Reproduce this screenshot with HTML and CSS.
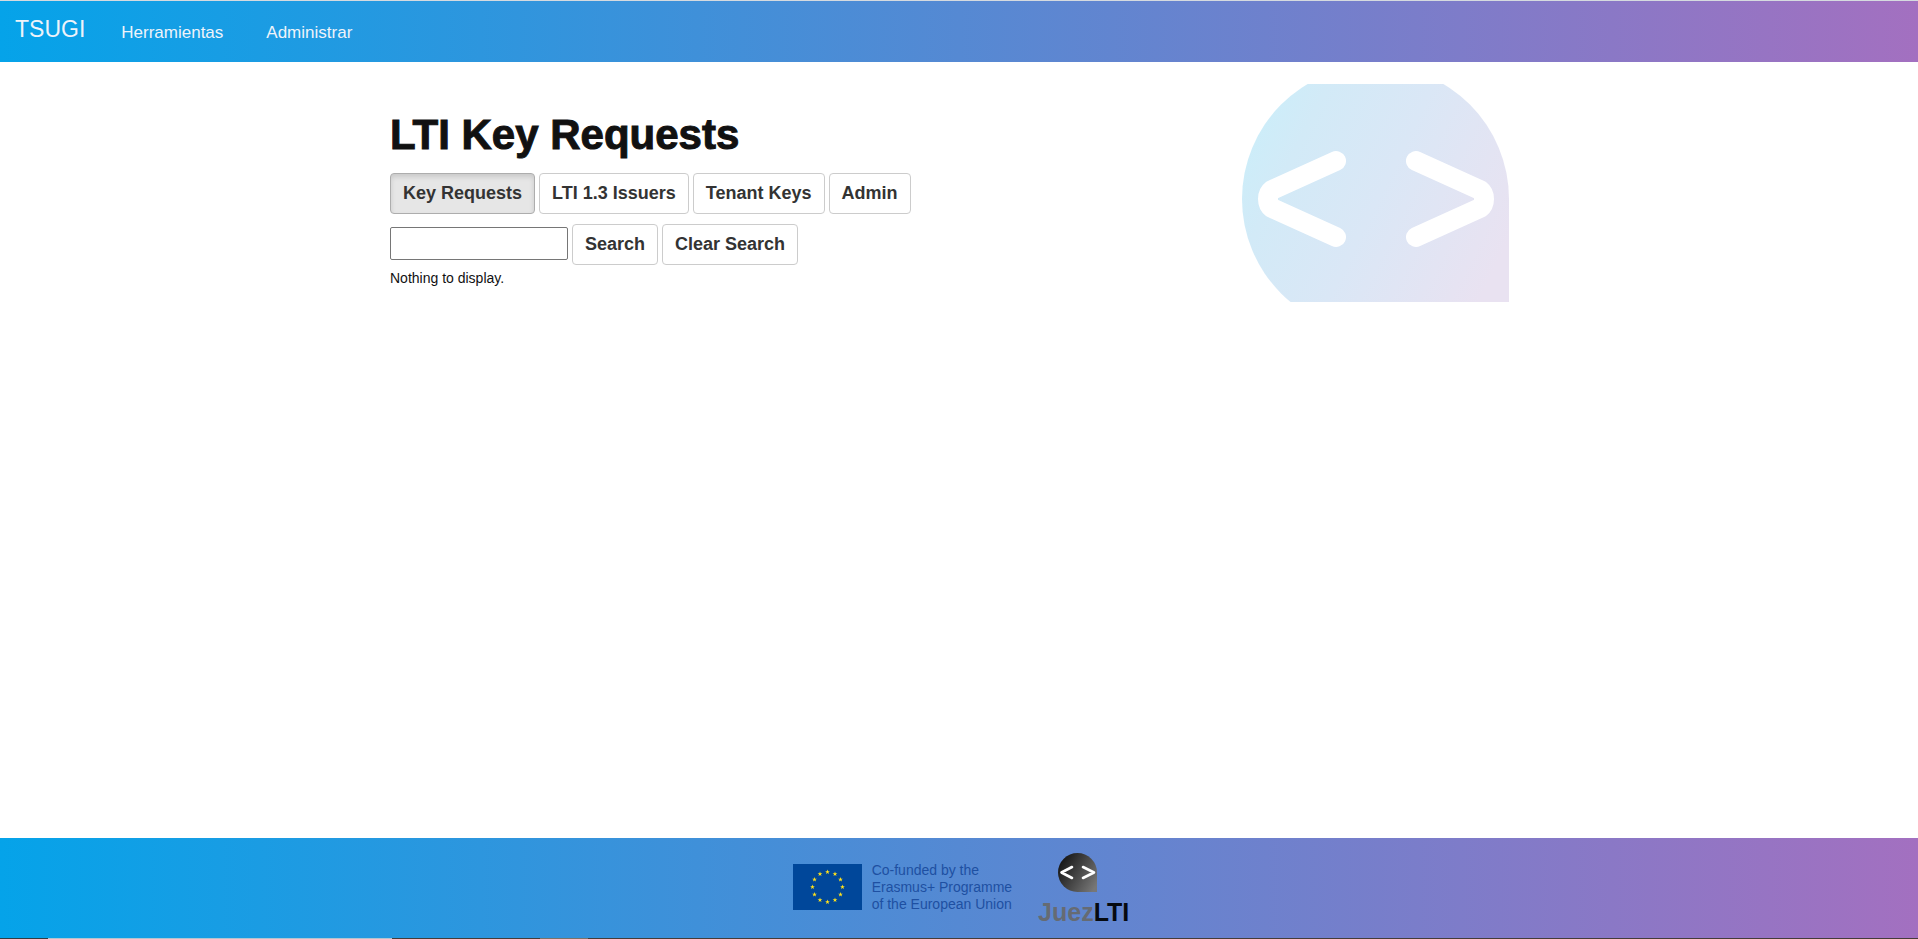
FILE: index.html
```html
<!DOCTYPE html>
<html lang="es">
<head>
<meta charset="utf-8">
<title>LTI Key Requests</title>
<link rel="stylesheet" href="styles.css">
</head>
<body>
<nav class="navbar">
  <a class="brand" href="#">TSUGI</a>
  <a class="nav-link" href="#">Herramientas</a>
  <a class="nav-link" href="#">Administrar</a>
</nav>
<main class="container">
  <section class="content">
    <h1>LTI Key Requests</h1>
    <div class="row">
      <a class="btn active" href="#">Key Requests</a>
      <a class="btn" href="#">LTI 1.3 Issuers</a>
      <a class="btn" href="#">Tenant Keys</a>
      <a class="btn" href="#">Admin</a>
    </div>
    <form class="row">
      <input class="search" type="text" aria-label="Search">
      <button class="btn" type="submit">Search</button>
      <button class="btn" type="button">Clear Search</button>
    </form>
    <p class="empty">Nothing to display.</p>
  </section>
  <svg class="watermark" viewBox="0 0 267 218" aria-hidden="true">
    <defs>
      <linearGradient id="pale" gradientUnits="userSpaceOnUse" x1="20" y1="40" x2="265" y2="160">
        <stop offset="0" stop-color="#cdedf9"/>
        <stop offset=".15" stop-color="#d2eaf7"/>
        <stop offset=".5" stop-color="#dae7f6"/>
        <stop offset="1" stop-color="#e9e2f1"/>
      </linearGradient>
    </defs>
    <path fill="url(#pale)" d="M133.500-18.500A133.500 133.500 0 0 1 267 115V248.500H133.500A133.500 133.500 0 0 1 133.500-18.500Z"/>
    <path fill="none" stroke="#fff" stroke-width="20" stroke-linecap="round" stroke-linejoin="round" d="M94 77L30 106Q26 109 26 115T30 124L94 153M174 77L238 106Q242 109 242 115T238 124L174 153"/>
  </svg>
</main>
<footer class="footer">
  <svg class="flag" viewBox="0 0 69 46" role="img" aria-label="European Union">
    <defs><path id="star" fill="#ffe11b" d="M0-2.500L.6-.8H2.400L.95.300 1.500 2 0 1-1.500 2-.95.300-2.400-.8H-.6Z"/></defs>
    <rect width="69" height="46" fill="#00479a"/>
    <use href="#star" x="34.500" y="8"/><use href="#star" x="42" y="10"/><use href="#star" x="47.500" y="15.500"/>
    <use href="#star" x="49.500" y="23"/><use href="#star" x="47.500" y="30.500"/><use href="#star" x="42" y="36"/>
    <use href="#star" x="34.500" y="38"/><use href="#star" x="27" y="36"/><use href="#star" x="21.500" y="30.500"/>
    <use href="#star" x="19.500" y="23"/><use href="#star" x="21.500" y="15.500"/><use href="#star" x="27" y="10"/>
  </svg>
  <p class="funding">Co-funded by the<br>Erasmus+ Programme<br>of the European Union</p>
  <div class="juez">
    <svg class="juez-mark" viewBox="0 0 39 39" aria-hidden="true">
      <defs><linearGradient id="dark" x1="0" y1=".2" x2="1" y2=".8"><stop offset="0" stop-color="#111"/><stop offset="1" stop-color="#777"/></linearGradient></defs>
      <path fill="url(#dark)" d="M19.500 0A19.500 19.500 0 0 1 39 19.500V39H19.500A19.500 19.500 0 0 1 19.500 0Z"/>
      <path fill="none" stroke="#fff" stroke-width="2.600" stroke-linecap="round" stroke-linejoin="round" d="M14 14L3.500 19.500 14 25M25 14L36 19.500 25 25"/>
    </svg>
    <span class="juez-name">Juez<b>LTI</b></span>
  </div>
</footer>
<div class="taskbar"></div>
</body>
</html>
```
FILE: styles.css
```css
* { box-sizing: border-box; }
body {
  margin: 0;
  min-height: 100vh;
  display: flex;
  flex-direction: column;
  background: #fff;
  color: #111;
  font: 14px/20px "Liberation Sans", Arial, sans-serif;
}
.navbar, .footer { background: linear-gradient(90deg, #05a3e9, #5589d3 50%, #a370c0); }
.navbar {
  display: flex;
  align-items: flex-start;
  height: 62px;
  padding: 0 15px;
  border-top: 1px solid #d5dadf;
}
.navbar a { color: #eef3fa; text-decoration: none; }
.brand { font-size: 23px; line-height: 28px; padding: 14px 20px 0 0; }
.nav-link { font-size: 17px; line-height: 24px; padding: 20px 27px 0 16px; }
.container {
  flex: 1;
  display: flex;
  justify-content: space-between;
  align-items: flex-start;
  width: 100%;
  max-width: 1170px;
  margin: 0 auto;
  padding: 22px 35px 0 16px;
}
.content { padding-top: 27px; }
h1 {
  margin: 0 0 14px;
  font-size: 42px;
  line-height: 48px;
  font-weight: 900;
  -webkit-text-stroke: 1px #111;
}
.row { display: flex; align-items: flex-start; gap: 4px; margin-bottom: 10px; }
.btn {
  padding: 10px 12px;
  border: 1px solid #ccc;
  border-radius: 4px;
  background: #fff;
  color: #333;
  font: bold 18px/19px "Liberation Sans", Arial, sans-serif;
  text-decoration: none;
}
.btn.active { background: #e6e6e6; border-color: #adadad; box-shadow: inset 0 3px 5px rgba(0, 0, 0, .125); }
.search { width: 178px; height: 33px; margin-top: 3px; border: 1px solid #767676; border-radius: 2px; }
.empty { margin: -7px 0 0; }
.watermark { width: 267px; height: 218px; }
.footer { display: flex; justify-content: center; height: 100px; padding-left: 4px; }
.flag { width: 69px; height: 46px; margin-top: 26px; }
.funding { margin: 24px 26px 0 10px; color: #1e50a2; font-size: 14px; line-height: 17px; }
.juez { padding-top: 15px; }
.juez-mark { display: block; width: 39px; height: 39px; margin-left: 20px; }
.juez-name { display: block; margin-top: 6px; color: #666b73; font-size: 25px; line-height: 28px; font-weight: bold; }
.juez-name b { color: #060a10; }
.taskbar {
  height: 1px;
  background: linear-gradient(90deg, #333b40 48px, #b4c4cf 48px 392px, #453c38 392px 540px, #7c7268 540px 588px, #453c38 588px);
}
```
